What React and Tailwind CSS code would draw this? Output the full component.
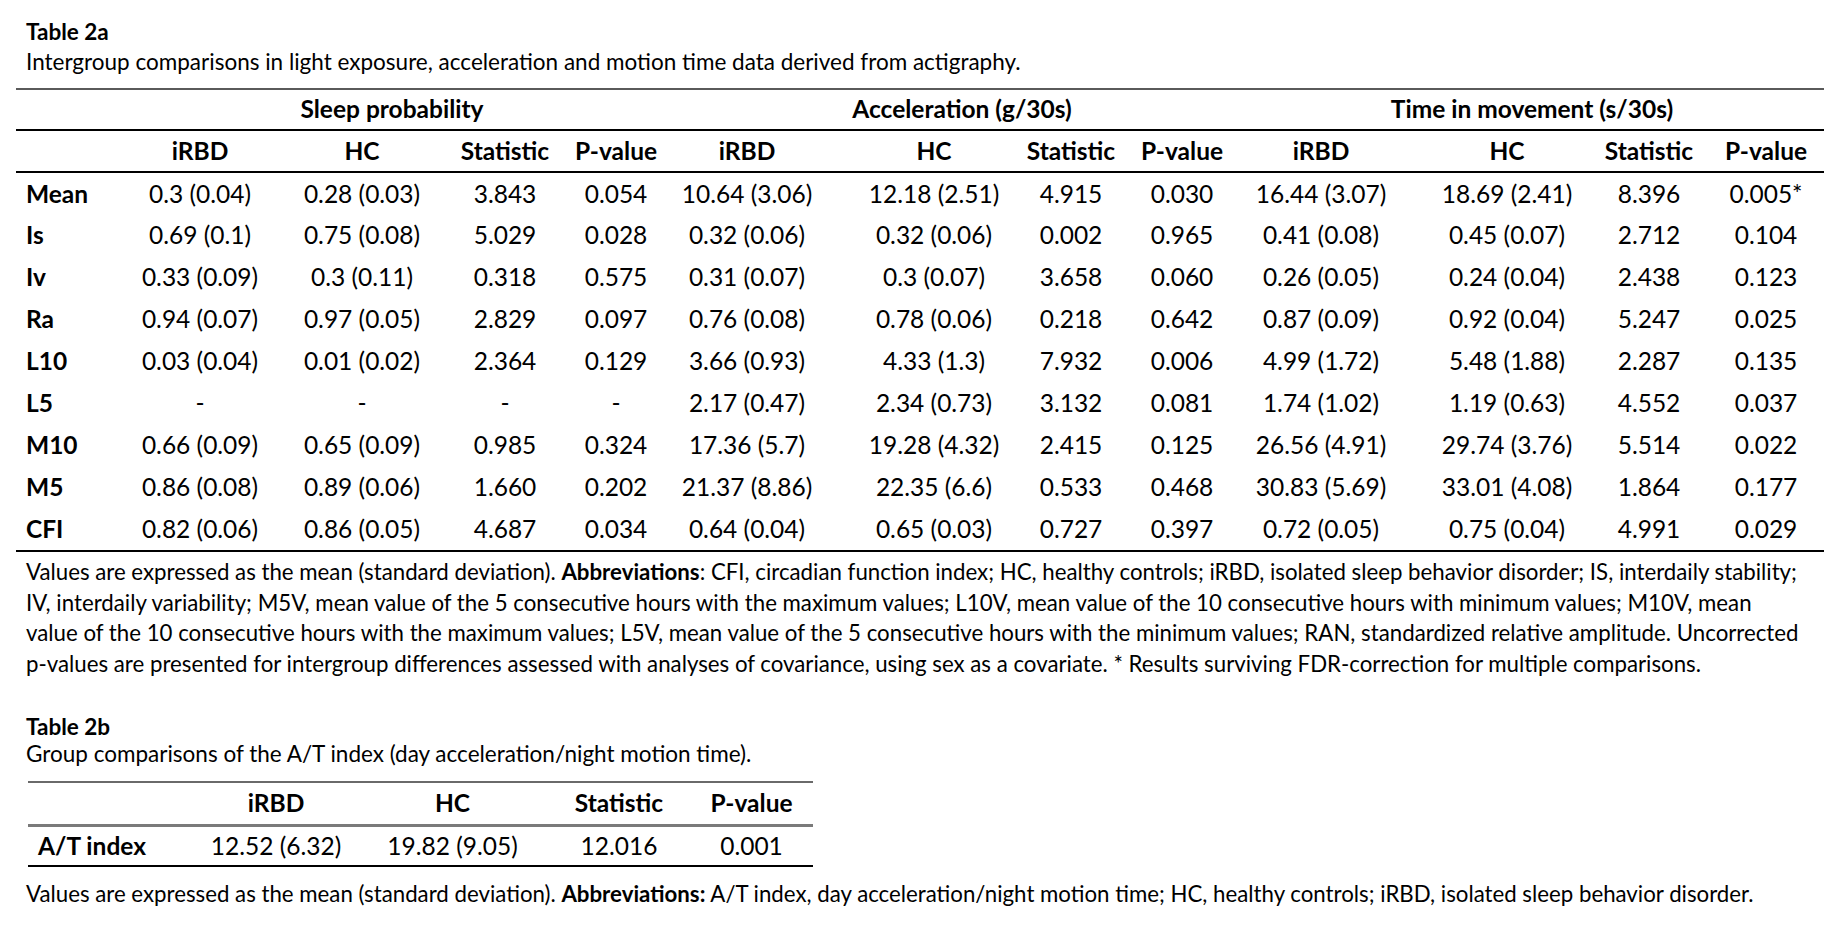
import React from "react";

const cols2a =
  "grid grid-cols-[103px_162px_162px_124px_98px_164px_181px_122px_100px_178px_180px_118px_116px]";
const cols2b = "grid grid-cols-[159px_178px_175px_158px_115px]";

// extra offsets so the centred text sits where the original table has it
const cellPad = ["", "", "", "", "", "pl-[29px]", "", "", "", "pl-[14px]", "", ""];

const rows2a = [
  ["Mean", "0.3 (0.04)", "0.28 (0.03)", "3.843", "0.054", "10.64 (3.06)", "12.18 (2.51)", "4.915", "0.030", "16.44 (3.07)", "18.69 (2.41)", "8.396", "0.005*"],
  ["Is", "0.69 (0.1)", "0.75 (0.08)", "5.029", "0.028", "0.32 (0.06)", "0.32 (0.06)", "0.002", "0.965", "0.41 (0.08)", "0.45 (0.07)", "2.712", "0.104"],
  ["Iv", "0.33 (0.09)", "0.3 (0.11)", "0.318", "0.575", "0.31 (0.07)", "0.3 (0.07)", "3.658", "0.060", "0.26 (0.05)", "0.24 (0.04)", "2.438", "0.123"],
  ["Ra", "0.94 (0.07)", "0.97 (0.05)", "2.829", "0.097", "0.76 (0.08)", "0.78 (0.06)", "0.218", "0.642", "0.87 (0.09)", "0.92 (0.04)", "5.247", "0.025"],
  ["L10", "0.03 (0.04)", "0.01 (0.02)", "2.364", "0.129", "3.66 (0.93)", "4.33 (1.3)", "7.932", "0.006", "4.99 (1.72)", "5.48 (1.88)", "2.287", "0.135"],
  ["L5", "-", "-", "-", "-", "2.17 (0.47)", "2.34 (0.73)", "3.132", "0.081", "1.74 (1.02)", "1.19 (0.63)", "4.552", "0.037"],
  ["M10", "0.66 (0.09)", "0.65 (0.09)", "0.985", "0.324", "17.36 (5.7)", "19.28 (4.32)", "2.415", "0.125", "26.56 (4.91)", "29.74 (3.76)", "5.514", "0.022"],
  ["M5", "0.86 (0.08)", "0.89 (0.06)", "1.660", "0.202", "21.37 (8.86)", "22.35 (6.6)", "0.533", "0.468", "30.83 (5.69)", "33.01 (4.08)", "1.864", "0.177"],
  ["CFI", "0.82 (0.06)", "0.86 (0.05)", "4.687", "0.034", "0.64 (0.04)", "0.65 (0.03)", "0.727", "0.397", "0.72 (0.05)", "0.75 (0.04)", "4.991", "0.029"],
];

const subHeads = ["iRBD", "HC", "Statistic", "P-value"];

export default function App() {
  return (
    <div className="w-[1847px] h-[947px] bg-white text-black font-['Lato',sans-serif] overflow-hidden">
      {/* TABLE 2a caption */}
      <div className="pt-[17px] pl-[26px] text-[22.5px] leading-[30px]">
        <div className="font-bold">Table 2a</div>
        <div>Intergroup comparisons in light exposure, acceleration and motion time data derived from actigraphy.</div>
      </div>

      {/* TABLE 2a */}
      <div className="ml-[16px] mt-[11px] w-[1808px] text-[24.5px]">
        <div className="border-t-2 border-[#5a5a5a] h-[41px] flex items-center font-bold">
          <div className="w-[103px]"></div>
          <div className="w-[546px] text-center">Sleep probability</div>
          <div className="w-[567px] pl-[27px] text-center">Acceleration (g/30s)</div>
          <div className="w-[592px] pl-[8px] text-center">Time in movement (s/30s)</div>
        </div>
        <div className={`${cols2a} border-t-2 border-black h-[42px] items-center font-bold`}>
          <div></div>
          {[0, 1, 2].flatMap((g) =>
            subHeads.map((h, j) => (
              <div key={g + h} className={`text-center ${cellPad[g * 4 + j]}`}>{h}</div>
            ))
          )}
        </div>
        <div className="border-t-2 border-black border-b-2">
          {rows2a.map((r) => (
            <div key={r[0]} className={`${cols2a} h-[41.9px] items-center`}>
              <div className="pl-[10px] font-bold">{r[0]}</div>
              {r.slice(1).map((c, i) => (
                <div key={i} className={`text-center ${cellPad[i]}`}>{c}</div>
              ))}
            </div>
          ))}
        </div>
      </div>

      {/* Notes 2a */}
      <div className="pl-[26px] pt-[5px] text-[22.25px] leading-[30.5px]">
        <div>
          Values are expressed as the mean (standard deviation). <b>Abbreviations</b>: CFI, circadian function index; HC, healthy controls; iRBD, isolated sleep behavior disorder; IS, interdaily stability;
        </div>
        <div>
          IV, interdaily variability; M5V, mean value of the 5 consecutive hours with the maximum values; L10V, mean value of the 10 consecutive hours with minimum values; M10V, mean
        </div>
        <div>
          value of the 10 consecutive hours with the maximum values; L5V, mean value of the 5 consecutive hours with the minimum values; RAN, standardized relative amplitude. Uncorrected
        </div>
        <div>
          p-values are presented for intergroup differences assessed with analyses of covariance, using sex as a covariate. * Results surviving FDR-correction for multiple comparisons.
        </div>
      </div>

      {/* TABLE 2b caption */}
      <div className="pl-[26px] pt-[34px] text-[22.5px] leading-[27px]">
        <div className="font-bold">Table 2b</div>
        <div>Group comparisons of the A/T index (day acceleration/night motion time).</div>
      </div>

      {/* TABLE 2b */}
      <div className="ml-[28px] mt-[14px] w-[785px] text-[24.5px]">
        <div className={`${cols2b} border-t-2 border-[#6a6a6a] h-[43px] items-center font-bold`}>
          <div></div>
          <div className="text-center">iRBD</div>
          <div className="text-center">HC</div>
          <div className="text-center">Statistic</div>
          <div className="text-center pr-[8px]">P-value</div>
        </div>
        <div className={`${cols2b} border-t-[3px] border-[#7a7a7a] border-b-2 border-b-black h-[43px] items-center`}>
          <div className="pl-[10px] font-bold">A/T index</div>
          <div className="text-center">12.52 (6.32)</div>
          <div className="text-center">19.82 (9.05)</div>
          <div className="text-center">12.016</div>
          <div className="text-center pr-[8px]">0.001</div>
        </div>
      </div>

      {/* Notes 2b */}
      <div className="pl-[26px] pt-[12px] text-[22.25px] leading-[30px]">
        Values are expressed as the mean (standard deviation). <b>Abbreviations:</b> A/T index, day acceleration/night motion time; HC, healthy controls; iRBD, isolated sleep behavior disorder.
      </div>
    </div>
  );
}
